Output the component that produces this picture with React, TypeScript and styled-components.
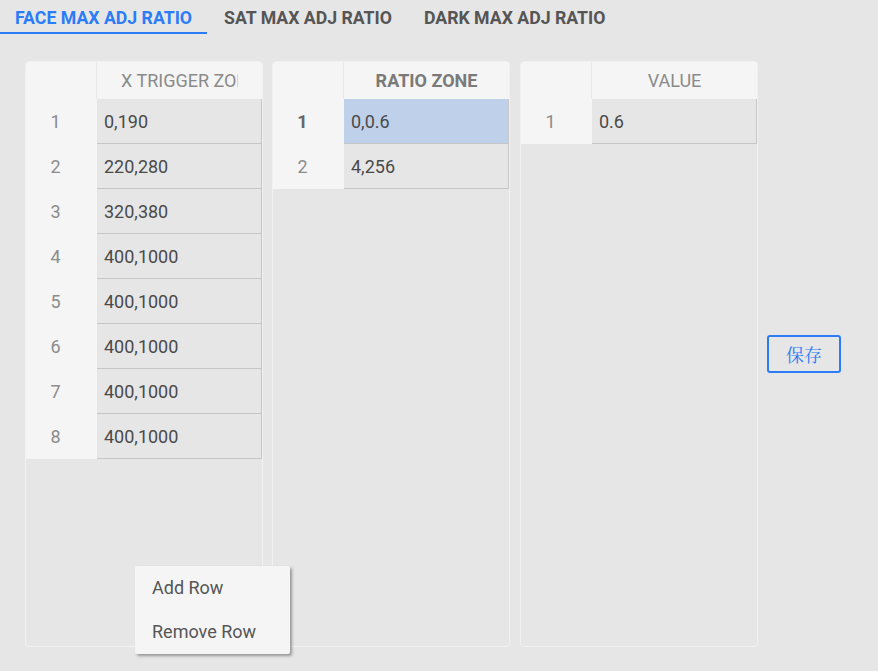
import React from "react";
import styled, { createGlobalStyle } from "styled-components";

const Global = createGlobalStyle`
  html, body { margin: 0; padding: 0; background: #e6e6e6; }
  body { font-family: Roboto, "Noto Sans", sans-serif; }
  #root { position: relative; width: 878px; height: 671px; overflow: hidden; }
`;

const TabBar = styled.div`
  display: flex;
  height: 34px;
`;

const Tab = styled.div<{ $active?: boolean }>`
  box-sizing: border-box;
  height: 34px;
  padding: 4px 15px 0;
  line-height: 28px;
  font-size: 17.7px;
  font-weight: 700;
  color: ${(p) => (p.$active ? "#2b7cf6" : "#555555")};
  border-bottom: 2px solid ${(p) => (p.$active ? "#2b7cf6" : "transparent")};
  white-space: nowrap;
  margin-right: 2px;
`;

const Content = styled.div`
  display: flex;
  align-items: center;
  gap: 9px;
  padding-left: 25px;
  margin-top: 27px;
`;

const Panel = styled.div`
  box-sizing: border-box;
  width: 238px;
  height: 586px;
  border: 1px solid #f1f1f1;
  border-radius: 4px;
  overflow: hidden;
  background: #e6e6e6;
  &:nth-child(3) { margin-left: 1px; }
`;

const Row = styled.div`
  display: grid;
  grid-template-columns: 71px minmax(0, 1fr);
`;

const Corner = styled.div`
  box-sizing: border-box;
  height: 37px;
  background: #f5f5f5;
  border-right: 1px solid #e9e9e9;
`;

const HeadCell = styled.div<{ $bold?: boolean }>`
  box-sizing: border-box;
  min-width: 0;
  height: 37px;
  background: #f5f5f5;
  padding: 0 24px;
  font-size: 18px;
  font-weight: ${(p) => (p.$bold ? 700 : 400)};
  color: ${(p) => (p.$bold ? "#7a7a7a" : "#8a8a8a")};
  display: flex;
  align-items: center;
`;

const HeadText = styled.div`
  flex: 1;
  min-width: 0;
  overflow: hidden;
  white-space: nowrap;
  text-align: center;
`;

const RowNum = styled.div<{ $bold?: boolean }>`
  box-sizing: border-box;
  height: 45px;
  padding-right: 12px;
  background: #f5f5f5;
  display: flex;
  align-items: center;
  justify-content: center;
  font-size: 18px;
  font-weight: ${(p) => (p.$bold ? 700 : 400)};
  color: ${(p) => (p.$bold ? "#666" : "#8c8c8c")};
`;

const Cell = styled.div<{ $selected?: boolean }>`
  box-sizing: border-box;
  height: 45px;
  padding-left: 7px;
  display: flex;
  align-items: center;
  font-size: 18px;
  color: #4a4a4a;
  background: ${(p) => (p.$selected ? "#bfd0ea" : "#e6e6e6")};
  border-bottom: 1px solid #c6c6c6;
  border-right: 1px solid #c6c6c6;
`;

const SaveButton = styled.button`
  box-sizing: border-box;
  width: 74px;
  height: 38px;
  border: 2px solid #2b7cf6;
  border-radius: 3px;
  background: transparent;
  color: #2b7cf6;
  font-family: "Noto Serif CJK SC", "AR PL UMing CN", "Noto Sans CJK SC", serif;
  font-size: 18px;
  padding: 0;
  cursor: pointer;
`;

const Menu = styled.div`
  position: absolute;
  left: 135px;
  top: 566px;
  width: 155px;
  box-sizing: border-box;
  background: #f5f5f5;
  border-radius: 2px;
  box-shadow: 2px 2px 3px rgba(0, 0, 0, 0.35);
  padding: 0;
`;

const MenuItem = styled.div`
  height: 44px;
  line-height: 44px;
  padding-left: 17px;
  font-size: 18px;
  color: #555;
  white-space: nowrap;
`;

type TableProps = {
  header: string;
  boldHeader?: boolean;
  rows: string[];
  selected?: number;
};

const DataTable: React.FC<TableProps> = ({ header, boldHeader, rows, selected }) => (
  <Panel>
    <Row>
      <Corner />
      <HeadCell $bold={boldHeader}>
        <HeadText>{header}</HeadText>
      </HeadCell>
    </Row>
    {rows.map((r, i) => (
      <Row key={i}>
        <RowNum $bold={selected === i}>{i + 1}</RowNum>
        <Cell $selected={selected === i}>{r}</Cell>
      </Row>
    ))}
  </Panel>
);

export default function App() {
  return (
    <>
      <Global />
      <TabBar>
        <Tab $active>FACE MAX ADJ RATIO</Tab>
        <Tab>SAT MAX ADJ RATIO</Tab>
        <Tab>DARK MAX ADJ RATIO</Tab>
      </TabBar>
      <Content>
        <DataTable
          header="X TRIGGER ZONE"
          rows={["0,190", "220,280", "320,380", "400,1000", "400,1000", "400,1000", "400,1000", "400,1000"]}
        />
        <DataTable header="RATIO ZONE" boldHeader rows={["0,0.6", "4,256"]} selected={0} />
        <DataTable header="VALUE" rows={["0.6"]} />
        <SaveButton>保存</SaveButton>
      </Content>
      <Menu>
        <MenuItem>Add Row</MenuItem>
        <MenuItem>Remove Row</MenuItem>
      </Menu>
    </>
  );
}
